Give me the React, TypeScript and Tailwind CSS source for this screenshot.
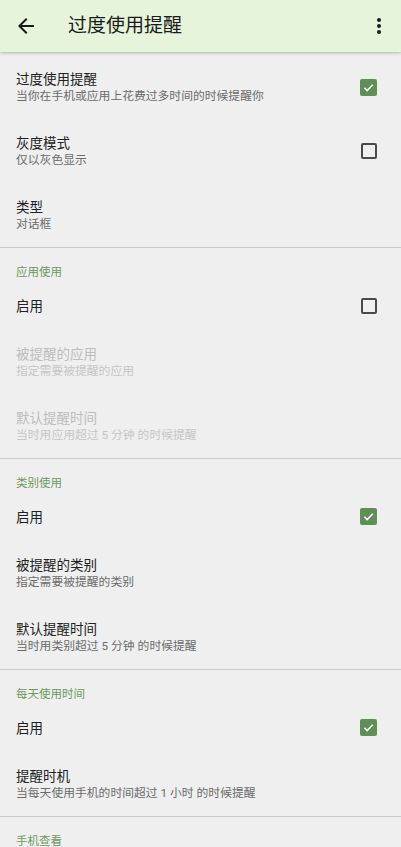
import { ReactNode } from 'react'

const font = { fontFamily: '"Roboto", "Noto Sans CJK SC", sans-serif' }

function CheckBox({ checked }: { checked: boolean }) {
  if (checked) {
    return (
      <div className="w-[17px] h-[17px] rounded-[2px] bg-[#5f8f57] flex items-center justify-center">
        <svg width="13" height="13" viewBox="0 0 24 24" fill="none" stroke="#fff" strokeWidth={3}>
          <path d="M4.5 12.5l5 5L20 7" />
        </svg>
      </div>
    )
  }
  return <div className="w-[16px] h-[16px] rounded-[2px] border-2 border-[#4a4a4a]" />
}

function Item({
  title,
  summary,
  checked,
  disabled,
}: {
  title: string
  summary?: string
  checked?: boolean
  disabled?: boolean
}) {
  return (
    <div className={`flex items-center pl-4 pr-6 ${summary ? 'h-[64px]' : 'h-[49px]'}`}>
      <div className="flex-1 min-w-0">
        <p className={`text-[13.5px] leading-[18px] ${disabled ? 'text-[#bdbdbd]' : 'text-[#212121]'}`}>{title}</p>
        {summary && (
          <p className={`text-[11.8px] leading-[17px] ${disabled ? 'text-[#c6c6c6]' : 'text-[#6b6b6b]'}`}>{summary}</p>
        )}
      </div>
      {checked !== undefined && <CheckBox checked={checked} />}
    </div>
  )
}

function Section({ title, children }: { title: string; children: ReactNode }) {
  return (
    <div className="border-t border-[#c9c9c9]">
      <p className="h-[33px] pl-4 pt-[16px] text-[11.5px] leading-[16px] text-[#6b9a60]">{title}</p>
      {children}
    </div>
  )
}

export default function App() {
  return (
    <div className="w-[401px] h-[847px] overflow-hidden bg-[#efefef]" style={font}>
      {/* 顶栏 */}
      <div className="h-[52px] bg-[#e5f4da] flex items-center shadow-[0_1px_3px_rgba(0,0,0,0.25)] relative">
        <div className="w-[68px] pl-[14px]">
          <svg width="24" height="24" viewBox="0 0 24 24" fill="#1a1a1a">
            <path d="M20 11H7.83l5.59-5.59L12 4l-8 8 8 8 1.41-1.41L7.83 13H20v-2z" />
          </svg>
        </div>
        <h1 className="flex-1 text-[19px] text-[#1a1a1a]">过度使用提醒</h1>
        <div className="pr-[10px]">
          <svg width="24" height="24" viewBox="0 0 24 24" fill="#1a1a1a">
            <circle cx="12" cy="6" r="2" />
            <circle cx="12" cy="12" r="2" />
            <circle cx="12" cy="18" r="2" />
          </svg>
        </div>
      </div>

      <div className="pt-[3px]">
        <Item title="过度使用提醒" summary="当你在手机或应用上花费过多时间的时候提醒你" checked />
        <Item title="灰度模式" summary="仅以灰色显示" checked={false} />
        <Item title="类型" summary="对话框" />

        <Section title="应用使用">
          <Item title="启用" checked={false} />
          <Item title="被提醒的应用" summary="指定需要被提醒的应用" disabled />
          <Item title="默认提醒时间" summary="当时用应用超过 5 分钟 的时候提醒" disabled />
        </Section>

        <Section title="类别使用">
          <Item title="启用" checked />
          <Item title="被提醒的类别" summary="指定需要被提醒的类别" />
          <Item title="默认提醒时间" summary="当时用类别超过 5 分钟 的时候提醒" />
        </Section>

        <Section title="每天使用时间">
          <Item title="启用" checked />
          <Item title="提醒时机" summary="当每天使用手机的时间超过 1 小时 的时候提醒" />
        </Section>

        <Section title="手机查看">
          <Item title="启用" checked />
        </Section>
      </div>
    </div>
  )
}
